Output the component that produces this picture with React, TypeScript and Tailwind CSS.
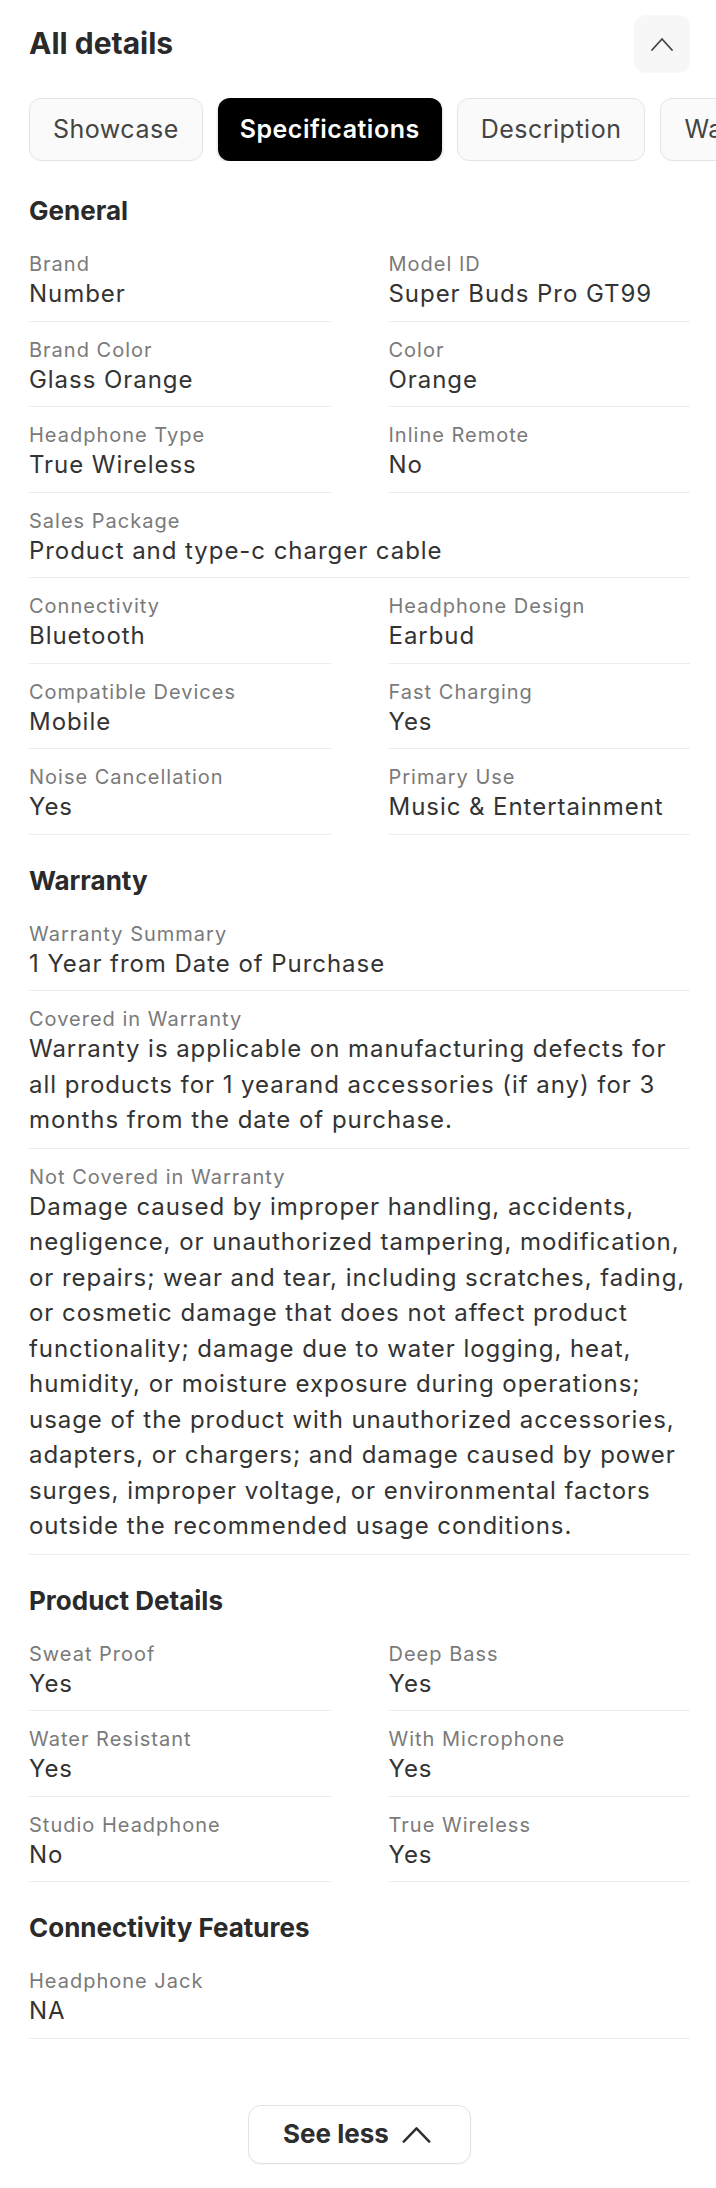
import React from "react";

type Item = { label: string; value: string; full?: boolean; multi?: boolean };

const general: Item[] = [
  { label: "Brand", value: "Number" },
  { label: "Model ID", value: "Super Buds Pro GT99" },
  { label: "Brand Color", value: "Glass Orange" },
  { label: "Color", value: "Orange" },
  { label: "Headphone Type", value: "True Wireless" },
  { label: "Inline Remote", value: "No" },
  { label: "Sales Package", value: "Product and type-c charger cable", full: true },
  { label: "Connectivity", value: "Bluetooth" },
  { label: "Headphone Design", value: "Earbud" },
  { label: "Compatible Devices", value: "Mobile" },
  { label: "Fast Charging", value: "Yes" },
  { label: "Noise Cancellation", value: "Yes" },
  { label: "Primary Use", value: "Music & Entertainment" },
];

const warranty: Item[] = [
  { label: "Warranty Summary", value: "1 Year from Date of Purchase", full: true },
  {
    label: "Covered in Warranty",
    value:
      "Warranty is applicable on manufacturing defects for all products for 1 yearand accessories (if any) for 3 months from the date of purchase.",
    full: true,
    multi: true,
  },
  {
    label: "Not Covered in Warranty",
    value:
      "Damage caused by improper handling, accidents, negligence, or unauthorized tampering, modification, or repairs; wear and tear, including scratches, fading, or cosmetic damage that does not affect product functionality; damage due to water logging, heat, humidity, or moisture exposure during operations; usage of the product with unauthorized accessories, adapters, or chargers; and damage caused by power surges, improper voltage, or environmental factors outside the recommended usage conditions.",
    full: true,
    multi: true,
  },
];

const productDetails: Item[] = [
  { label: "Sweat Proof", value: "Yes" },
  { label: "Deep Bass", value: "Yes" },
  { label: "Water Resistant", value: "Yes" },
  { label: "With Microphone", value: "Yes" },
  { label: "Studio Headphone", value: "No" },
  { label: "True Wireless", value: "Yes" },
];

const connectivity: Item[] = [{ label: "Headphone Jack", value: "NA", full: true }];

function Spec({ item }: { item: Item }) {
  return (
    <div
      className={
        (item.full ? "col-span-2 " : "") +
        (item.multi ? "pb-[10px] " : "pb-[9px] ") +
        "pt-[16px] border-b border-[#ececec]"
      }
    >
      <div className="text-[20px] leading-[24px] tracking-[1px] text-[#7a7a7a]">{item.label}</div>
      <div className="text-[24px] leading-[35.5px] tracking-[0.95px] text-[#333333]">{item.value}</div>
    </div>
  );
}

function Section({ title, items, first }: { title: string; items: Item[]; first?: boolean }) {
  return (
    <section className={first ? "mt-[34px]" : "mt-[30px]"}>
      <h2 className="text-[26px] leading-[32px] font-bold text-[#2a2a2a] mb-[9px]">{title}</h2>
      <div className="grid grid-cols-2 gap-x-[58px]">
        {items.map((it) => (
          <Spec key={it.label} item={it} />
        ))}
      </div>
    </section>
  );
}

const tabs = ["Showcase", "Specifications", "Description", "Warranty"];

export default function App() {
  return (
    <div
      className="w-[716px] min-h-[2188px] bg-white overflow-hidden pl-[29px] pr-[26px] pt-[15px] pb-[26px]"
      style={{ fontFamily: "Inter, 'Noto Sans', sans-serif" }}
    >
      <div className="flex items-center justify-between h-[58px]">
        <h1 className="text-[30px] leading-[36px] font-bold text-[#2a2a2a] mb-[3px]">All details</h1>
        <button className="w-[56px] h-[58px] rounded-[12px] bg-[#f7f7f7] flex items-center justify-center text-[#444444]">
          <svg className="w-[22px] h-[14px]" viewBox="0 0 22 14" fill="none">
            <path d="M1 13 L11 2 L21 13" stroke="currentColor" strokeWidth="1.8" strokeLinecap="round" strokeLinejoin="round" />
          </svg>
        </button>
      </div>

      <div className="mt-[25px] -mr-[26px] flex gap-[15px] overflow-hidden">
        {tabs.map((t) =>
          t === "Specifications" ? (
            <div
              key={t}
              className="shrink-0 h-[63px] px-[22px] rounded-[12px] bg-black text-white text-[25px] tracking-[0.5px] font-semibold flex items-center shadow-[0_1px_3px_rgba(0,0,0,0.25)]"
            >
              {t}
            </div>
          ) : (
            <div
              key={t}
              className="shrink-0 h-[63px] px-[23px] rounded-[12px] border border-[#e4e4e4] bg-[#fafafa] text-[#444444] text-[25px] tracking-[0.5px] flex items-center"
            >
              {t}
            </div>
          )
        )}
      </div>

      <Section title="General" items={general} first />
      <Section title="Warranty" items={warranty} />
      <Section title="Product Details" items={productDetails} />
      <Section title="Connectivity Features" items={connectivity} />

      <div className="mt-[66px] flex justify-center">
        <button className="h-[59px] pl-[34px] pr-[39px] rounded-[13px] border border-[#e2e2e2] bg-white flex items-center gap-[13px] text-[#2e2e2e] shadow-[0_1px_2px_rgba(0,0,0,0.04)]">
          <span className="text-[26px] font-bold leading-[32px]">See less</span>
          <svg className="w-[29px] h-[17px]" viewBox="0 0 30 18" fill="none">
            <path d="M1.5 16.5 L15 2.5 L28.5 16.5" stroke="currentColor" strokeWidth="2.6" strokeLinecap="round" strokeLinejoin="round" />
          </svg>
        </button>
      </div>
    </div>
  );
}
